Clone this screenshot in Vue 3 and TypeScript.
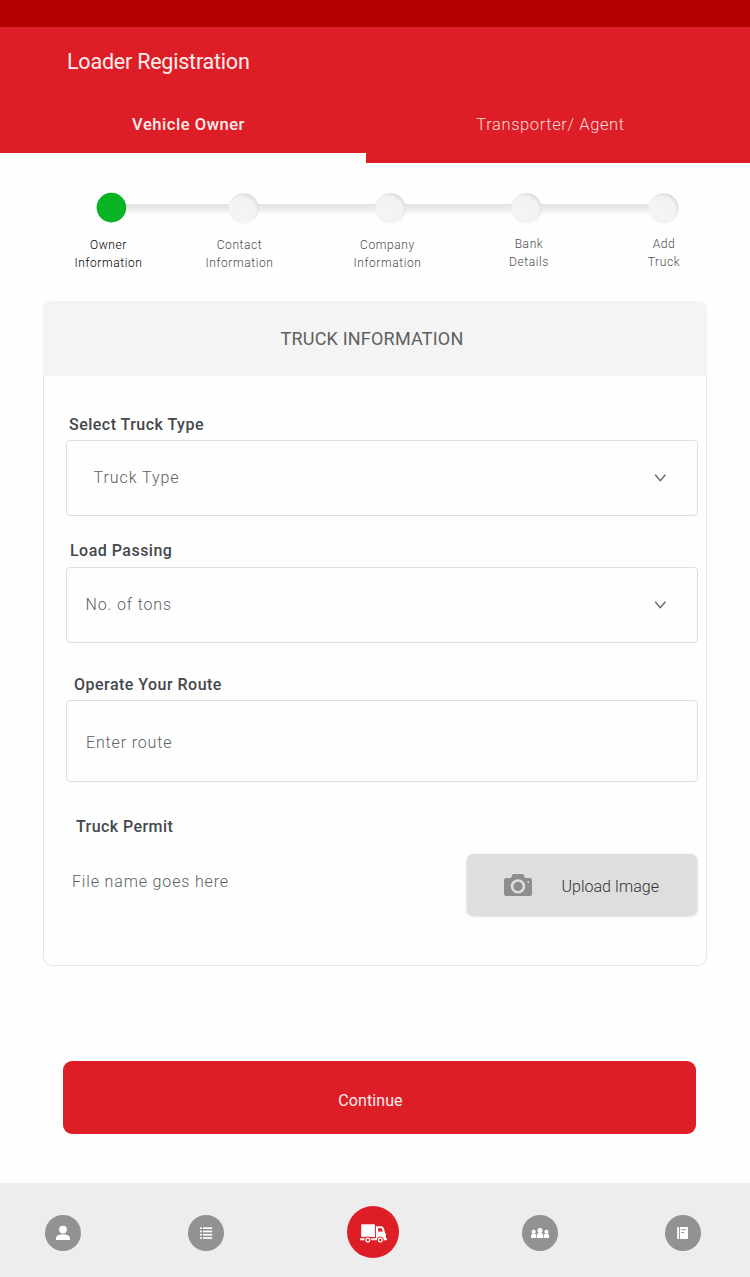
<script setup lang="ts">
import { ref } from 'vue'

interface Step {
  lines: [string, string]
  raised?: boolean
}

interface Field {
  id: string
  label: string
  placeholder: string
  select: boolean
}

const tabs: string[] = ['Vehicle Owner', 'Transporter/ Agent']
const activeTab = ref(0)

const steps: Step[] = [
  { lines: ['Owner', 'Information'] },
  { lines: ['Contact', 'Information'] },
  { lines: ['Company', 'Information'] },
  { lines: ['Bank', 'Details'], raised: true },
  { lines: ['Add', 'Truck'], raised: true },
]
const pendingStops: number[] = [243.5, 390.5, 526.5, 663.5]

const fields: Field[] = [
  { id: 'type', label: 'Select Truck Type', placeholder: 'Truck Type', select: true },
  { id: 'load', label: 'Load Passing', placeholder: 'No. of tons', select: true },
  { id: 'route', label: 'Operate Your Route', placeholder: 'Enter route', select: false },
]
</script>

<template>
  <div class="screen">
    <div class="status-bar"></div>
    <header class="header">
      <h1 class="title">Loader Registration</h1>
      <nav class="tabs">
        <button
          v-for="(tab, i) in tabs"
          :key="tab"
          class="tab"
          :class="{ active: activeTab === i }"
          @click="activeTab = i"
        >
          <span>{{ tab }}</span>
        </button>
      </nav>
    </header>

    <section class="stepper">
      <svg class="rail" width="750" height="50" viewBox="0 0 750 50">
        <defs>
          <linearGradient id="railFill" x1="0" y1="0" x2="0" y2="1">
            <stop offset="0" stop-color="#e2e2e2" />
            <stop offset="0.45" stop-color="#eaeaea" />
            <stop offset="0.75" stop-color="#f3f3f3" />
            <stop offset="1" stop-color="#f8f8f8" />
          </linearGradient>
          <radialGradient id="stopFill" cx="0.42" cy="0.6" r="0.62">
            <stop offset="0" stop-color="#f4f4f4" />
            <stop offset="0.74" stop-color="#f3f3f3" />
            <stop offset="0.9" stop-color="#e6e6e6" />
            <stop offset="1" stop-color="#d8d8d8" />
          </radialGradient>
        </defs>
        <rect x="115" y="21" width="540" height="10" fill="url(#railFill)" />
        <circle v-for="x in pendingStops" :key="x" :cx="x" cy="25.4" r="15.2" fill="url(#stopFill)" />
        <circle cx="111.4" cy="24.6" r="14.8" fill="#08b424" />
      </svg>
      <ol class="step-labels">
        <li
          v-for="(step, i) in steps"
          :key="i"
          class="step"
          :class="{ current: i === 0, raised: step.raised }"
        >
          {{ step.lines[0] }}<br />{{ step.lines[1] }}
        </li>
      </ol>
    </section>

    <main class="card">
      <h2 class="card-title">TRUCK INFORMATION</h2>
      <div class="card-body">
        <div v-for="f in fields" :key="f.id" class="field" :class="f.id">
          <div class="label">{{ f.label }}</div>
          <div class="box">
            <span class="placeholder">{{ f.placeholder }}</span>
            <svg v-if="f.select" class="chevron" width="12" height="8" viewBox="0 0 12 8">
              <path d="M1.2.7 6.3 6.6 11.4.7" fill="none" stroke="#666" stroke-width="1.4" />
            </svg>
          </div>
        </div>
        <div class="label permit-label">Truck Permit</div>
        <div class="upload-row">
          <span class="placeholder file-name">File name goes here</span>
          <button class="upload">
            <svg width="28" height="22" viewBox="0 0 28 22">
              <path
                fill="#8d8d8d"
                fill-rule="evenodd"
                d="M2.2 4H7L8.1.9Q8.400 0 9.400 0h9.200q1 0 1.300.9L21 4h4.800Q28 4 28 6.200v13.600q0 2.200-2.200 2.200H2.200Q0 22 0 19.800V6.200Q0 4 2.200 4ZM14 5.200a7.200 7.200 0 1 0 0 14.400a7.200 7.200 0 1 0 0-14.400ZM24.200 7a1 1 0 1 0 0 2a1 1 0 1 0 0-2Z"
              />
              <circle cx="14" cy="12.4" r="4.6" fill="#8d8d8d" />
            </svg>
            <span>Upload Image</span>
          </button>
        </div>
      </div>
    </main>

    <button class="continue"><span>Continue</span></button>

    <nav class="bottom-nav">
      <a class="nav-item">
        <svg width="36" height="36" viewBox="0 0 36 36" fill="#fff">
          <circle cx="18" cy="14.6" r="3.9" />
          <path d="M11 25v-2c0-2.600 4-3.800 7-3.800s7 1.200 7 3.800v2z" />
        </svg>
      </a>
      <a class="nav-item">
        <svg width="36" height="36" viewBox="0 0 36 36" fill="#fff">
          <g v-for="y in [12.3, 15.6, 18.9, 22.2]" :key="y">
            <rect x="12" :y="y" width="1.9" height="1.7" />
            <rect x="15" :y="y" width="9.2" height="1.7" />
          </g>
        </svg>
      </a>
      <a class="nav-item primary">
        <svg width="52" height="52" viewBox="0 0 52 52" fill="#fff">
          <rect x="14.2" y="18.3" width="13.7" height="12.6" />
          <path fill-rule="evenodd" d="M28.900 20.200h4.800c2.300 0 3.300 1.500 3.800 4.300l.4 2.300 1 .8v4.400h1v2.200H13.200v-1.900h15.700zM31 22.200v3.400h4.800l-.5-1.900c-.3-1.100-.8-1.500-1.800-1.500z" />
          <g fill="#fff" stroke="#dd1e27" stroke-width="1">
            <circle cx="20.8" cy="34" r="3.1" />
            <circle cx="33.3" cy="34" r="3.1" />
          </g>
          <g fill="#dd1e27">
            <circle cx="20.8" cy="34" r="1.2" />
            <circle cx="33.3" cy="34" r="1.2" />
          </g>
        </svg>
      </a>
      <a class="nav-item">
        <svg width="36" height="36" viewBox="0 0 36 36" fill="#fff">
          <circle cx="18" cy="15.4" r="2.5" />
          <circle cx="11.7" cy="16.9" r="2.1" />
          <circle cx="24.4" cy="16.9" r="2.1" />
          <path d="M15 23v-3q0-1.900 1.900-1.900h2.300q1.900 0 1.900 1.900V23zM9 23v-2.400q0-1.500 1.500-1.500h2.300q1.600 0 1.600 1.500V23zM21.700 23v-2.400q0-1.500 1.600-1.500h2.300q1.500 0 1.500 1.500V23z" />
        </svg>
      </a>
      <a class="nav-item">
        <svg width="36" height="36" viewBox="0 0 36 36">
          <path fill="#fff" d="M12.200 12h1.900v12h-1.900zM15 12h8v12h-8z" />
          <path stroke="#929292" stroke-width="1" d="M16.300 14.700h4.600M16.300 17.500h2.700" />
        </svg>
      </a>
    </nav>
  </div>
</template>

<style>
body {
  margin: 0;
  background: #fff;
}
</style>

<style scoped>
.screen {
  width: 750px;
  height: 1277px;
  display: flex;
  flex-direction: column;
  overflow: hidden;
  background: #fefefe;
  font-family: Roboto, 'Liberation Sans', sans-serif;
}
button {
  border: 0;
  padding: 0;
  background: none;
  font: inherit;
  color: inherit;
}
.status-bar {
  height: 27px;
  background: #b70000;
}
.header {
  height: 136px;
  background: #dd1e27;
  color: #fff;
}
.title {
  margin: 0;
  padding: 21px 0 0 67px;
  font-size: 21.5px;
  line-height: 27px;
  font-weight: 400;
  letter-spacing: -0.22px;
  color: #ffeded;
}
.tabs {
  display: grid;
  grid-template-columns: 366px 384px;
  height: 88px;
}
.tab {
  box-sizing: border-box;
  height: 88px;
  padding: 40px 0 0;
  display: flex;
  justify-content: center;
  align-items: flex-start;
  font-size: 16.5px;
  line-height: 20px;
  letter-spacing: 0.6px;
  font-weight: 300;
  color: #fcdcdd;
}
.tab:first-child {
  padding-left: 11px;
}
.tab:last-child {
  padding-right: 15px;
}
.tab.active {
  border-bottom: 10px solid #fff;
  font-weight: 500;
  letter-spacing: 0.55px;
  color: #ffeded;
}
.stepper {
  height: 138px;
}
.rail {
  display: block;
  margin-top: 20px;
}
.step-labels {
  list-style: none;
  margin: 3px 0 0 43px;
  padding: 0;
  display: grid;
  grid-template-columns: 131px 131px 165px 119px 151px;
}
.step {
  font-size: 12px;
  line-height: 18px;
  letter-spacing: 0.6px;
  font-weight: 300;
  text-align: center;
  color: #4c4c4c;
}
.step.current {
  color: #000;
}
.step.raised {
  margin: -1px 1px 0 0;
}
.card {
  box-sizing: border-box;
  width: 664px;
  height: 665px;
  margin-left: 43px;
  border: 1px solid #e3e3e3;
  border-top: 0;
  border-radius: 9px;
}
.card-title {
  margin: 0 -1px;
  height: 75px;
  box-sizing: border-box;
  padding-right: 6px;
  border-radius: 9px 9px 0 0;
  background: #f4f4f4;
  text-align: center;
  font-size: 18px;
  line-height: 75px;
  font-weight: 400;
  letter-spacing: 0.2px;
  color: #606060;
}
.card-body {
  padding: 39px 8px 0 22px;
}
.label {
  height: 20px;
  font-size: 16px;
  line-height: 20px;
  font-weight: 500;
  letter-spacing: 0.48px;
  color: #44484d;
}
.box {
  box-sizing: border-box;
  height: 76px;
  display: flex;
  justify-content: space-between;
  align-items: center;
  border: 1px solid #dedede;
  border-radius: 4px;
  margin-top: 5px;
  padding: 0 31px 0 19px;
}
.placeholder {
  font-size: 16px;
  line-height: 20px;
  font-weight: 300;
  letter-spacing: 0.85px;
  color: #606060;
}
.type .label {
  padding-left: 3px;
}
.type .box {
  padding-left: 26.5px;
}
.type .placeholder {
  letter-spacing: 0.95px;
}
.type .chevron {
  margin-bottom: 1px;
}
.load {
  margin-top: 25px;
}
.load .label {
  padding-left: 4px;
}
.load .box {
  margin-top: 6px;
  padding-left: 18.5px;
}
.route {
  margin-top: 32px;
}
.route .label {
  padding-left: 8px;
}
.route .box {
  height: 82px;
}
.route .placeholder {
  margin-top: 4px;
}
.permit-label {
  margin-top: 35px;
  padding-left: 10px;
  letter-spacing: 0.42px;
}
.upload-row {
  display: flex;
  justify-content: space-between;
  margin-top: 17px;
}
.file-name {
  margin: 18px 0 0 6px;
}
.upload {
  width: 230px;
  height: 61px;
  box-sizing: border-box;
  padding: 0 0 0 37px;
  margin-right: 1px;
  display: flex;
  align-items: center;
  gap: 29.5px;
  border-radius: 6px;
  background: #dedede;
  box-shadow: 0 1px 3px rgba(0, 0, 0, 0.2);
  font-size: 16px;
  font-weight: 300;
  color: #333;
}
.upload span {
  padding-top: 3px;
}
.continue {
  width: 633px;
  height: 73px;
  flex: none;
  margin: 95px 0 0 63px;
  border-radius: 9px;
  background: #dd1e27;
  color: #ffeded;
  font-size: 16px;
  letter-spacing: 0.1px;
}
.continue span {
  display: block;
  padding: 5px 18px 0 0;
}
.bottom-nav {
  box-sizing: border-box;
  height: 94px;
  margin-top: auto;
  padding: 5px 49px 0 45px;
  display: grid;
  grid-template-columns: 143px 159px 175px 143px 36px;
  align-items: center;
  background: #ededed;
}
.nav-item {
  width: 36px;
  height: 36px;
  border-radius: 50%;
  background: #929292;
}
.nav-item svg {
  display: block;
}
.nav-item.primary {
  width: 52px;
  height: 52px;
  margin-top: -1px;
  background: #dd1e27;
}
</style>
